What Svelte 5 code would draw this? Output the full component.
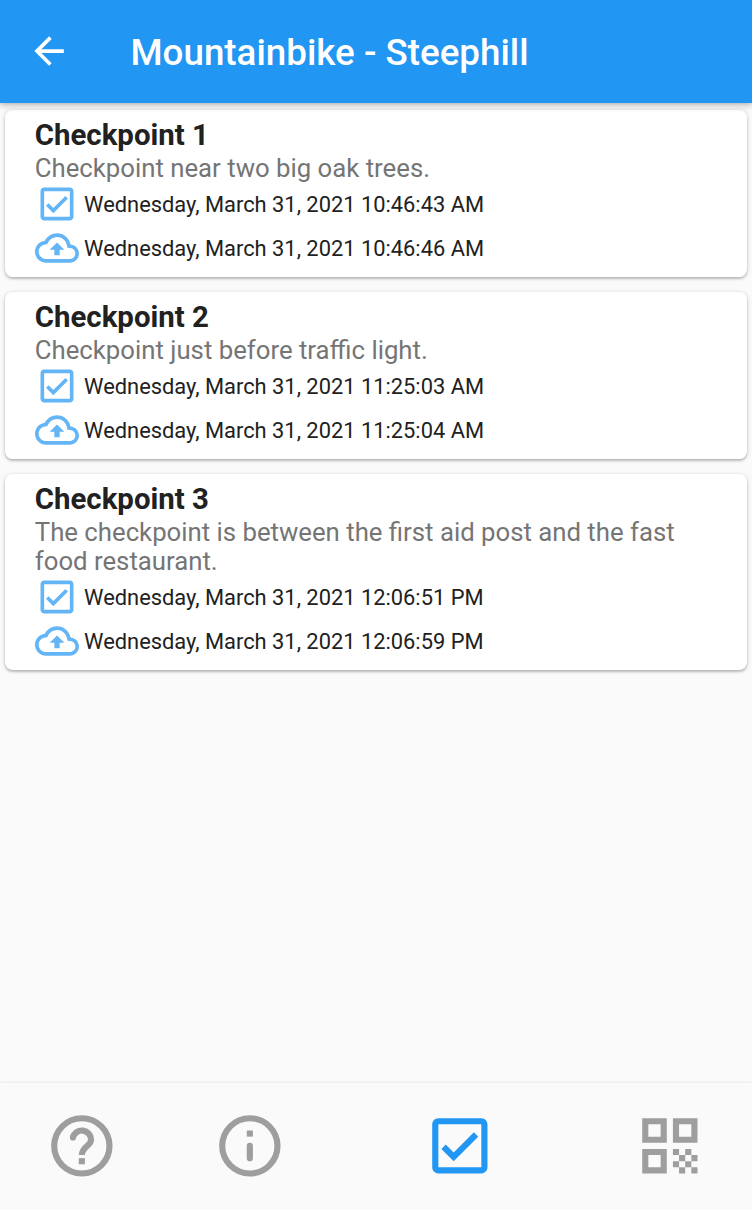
<script>
  const paths = {
    back: 'M20 11H7.83l5.59-5.59L12 4l-8 8 8 8 1.41-1.41L7.83 13H20v-2z',
    check:
      'M19 3H5c-1.1 0-2 .9-2 2v14c0 1.1.9 2 2 2h14c1.1 0 2-.9 2-2V5c0-1.1-.9-2-2-2zm0 16H5V5h14v14zM17.99 9l-1.41-1.42-6.59 6.59-2.58-2.57-1.42 1.41 4 3.99z',
    upload:
      'M19.35 10.04C18.67 6.59 15.64 4 12 4 9.11 4 6.6 5.64 5.35 8.04 2.34 8.36 0 10.91 0 14c0 3.31 2.69 6 6 6h13c2.76 0 5-2.24 5-5 0-2.64-2.05-4.78-4.65-4.96zM19 18H6c-2.21 0-4-1.79-4-4 0-2.05 1.53-3.76 3.56-3.97l1.07-.11.5-.95C8.08 7.14 9.94 6 12 6c2.62 0 4.88 1.86 5.39 4.43l.3 1.5 1.53.11c1.56.1 2.78 1.41 2.78 2.96 0 1.65-1.35 3-3 3zM8 13h2.55v3h2.9v-3H16l-4-4z',
    qr: 'M3 3h8v8H3zM5 5v4h4V5zM13 3h8v8h-8zM15 5v4h4V5zM3 13h8v8H3zM5 15v4h4v-4zM13 13h2v2h-2zM17 13h2v2h-2zM15 15h2v2h-2zM19 15h2v2h-2zM13 17h2v2h-2zM17 17h2v2h-2zM15 19h2v2h-2zM19 19h2v2h-2z'
  };

  const checkpoints = [
    {
      name: 'Checkpoint 1',
      description: 'Checkpoint near two big oak trees.',
      checked: 'Wednesday, March 31, 2021 10:46:43 AM',
      uploaded: 'Wednesday, March 31, 2021 10:46:46 AM'
    },
    {
      name: 'Checkpoint 2',
      description: 'Checkpoint just before traffic light.',
      checked: 'Wednesday, March 31, 2021 11:25:03 AM',
      uploaded: 'Wednesday, March 31, 2021 11:25:04 AM'
    },
    {
      name: 'Checkpoint 3',
      description: 'The checkpoint is between the first aid post and the fast food restaurant.',
      checked: 'Wednesday, March 31, 2021 12:06:51 PM',
      uploaded: 'Wednesday, March 31, 2021 12:06:59 PM'
    }
  ];
</script>

{#snippet icon(d)}
  <svg viewBox="0 0 24 24" aria-hidden="true"><path {d} fill="currentColor" fill-rule="evenodd" /></svg>
{/snippet}

<div class="screen">
  <header>
    <button class="back" aria-label="Back">{@render icon(paths.back)}</button>
    <h1>Mountainbike - Steephill</h1>
  </header>

  <main>
    {#each checkpoints as c}
      <article>
        <h2>{c.name}</h2>
        <p>{c.description}</p>
        <div class="row">{@render icon(paths.check)}<time>{c.checked}</time></div>
        <div class="row">{@render icon(paths.upload)}<time>{c.uploaded}</time></div>
      </article>
    {/each}
  </main>

  <nav>
    <div class="pair">
      <button aria-label="Help">
        <svg viewBox="0 0 24 24" fill="none" stroke="currentColor" stroke-width="2">
          <circle cx="12" cy="12" r="9" />
          <path d="M9.1 9.25A3 3 0 0 1 15 10c0 2-3 2.3-3 5" />
          <circle cx="9.1" cy="9.25" r="1" fill="currentColor" stroke="none" />
          <path d="M12 16v2" />
        </svg>
      </button>
      <button aria-label="Information">
        <svg viewBox="0 0 24 24" fill="none" stroke="currentColor" stroke-width="2">
          <circle cx="12" cy="12" r="9" />
          <path d="M12 7v2" />
          <path d="M12 12v4" stroke-linecap="round" />
        </svg>
      </button>
    </div>
    <button class="active" aria-label="Checkpoints">{@render icon(paths.check)}</button>
    <button aria-label="Scan code">{@render icon(paths.qr)}</button>
  </nav>
</div>

<style>
  :global(body) {
    margin: 0;
  }
  .screen {
    height: 1210px;
    display: flex;
    flex-direction: column;
    background: #fafafa;
    font-family: Roboto, sans-serif;
    color: #212121;
    overflow: hidden;
  }
  h1,
  h2,
  p {
    margin: 0;
  }
  svg {
    display: block;
    flex: none;
  }
  button {
    border: 0;
    padding: 0;
    background: none;
    color: inherit;
  }
  header {
    position: relative;
    flex: none;
    height: 103px;
    box-sizing: border-box;
    padding-left: 27.3px;
    display: flex;
    align-items: center;
    gap: 59px;
    background: #2196f3;
    color: #fff;
    box-shadow: 0 3px 7px rgba(0, 0, 0, 0.2), 0 1px 3px rgba(0, 0, 0, 0.1);
  }
  .back svg {
    width: 44.2px;
    height: 44.2px;
  }
  h1 {
    font-size: 36.75px;
    line-height: 44px;
    font-weight: 500;
    padding-top: 2px;
  }
  main {
    flex: 1;
    padding: 7px 5.4px;
    display: flex;
    flex-direction: column;
    gap: 15px;
  }
  article {
    padding: 8px 29px 7px 29.4px;
    border-radius: 7.4px;
    background: #fff;
    box-shadow: 0 2px 2px rgba(0, 0, 0, 0.14), 0 1px 4px rgba(0, 0, 0, 0.2);
  }
  h2 {
    font-size: 29.4px;
    line-height: 35px;
    font-weight: 700;
  }
  p {
    font-size: 25.74px;
    line-height: 29px;
    margin-top: 1px;
    margin-bottom: -1px;
    color: #757575;
  }
  .row {
    height: 44px;
    display: flex;
    align-items: center;
    gap: 5.3px;
    color: #64b5f6;
  }
  .row svg {
    width: 44px;
    height: 44px;
  }
  time {
    font-size: 21.87px;
    color: #212121;
  }
  nav {
    flex: none;
    height: 127px;
    box-sizing: border-box;
    padding-bottom: 2px;
    display: flex;
    justify-content: space-between;
    align-items: center;
    color: #9e9e9e;
    background: #fafafa;
    box-shadow: 0 -1px 2px rgba(0, 0, 0, 0.07);
  }
  .pair {
    display: flex;
    gap: 4px;
  }
  nav button {
    width: 164px;
    display: grid;
    place-items: center;
  }
  nav svg {
    width: 73.7px;
    height: 73.7px;
  }
  .active {
    color: #2196f3;
  }
</style>
